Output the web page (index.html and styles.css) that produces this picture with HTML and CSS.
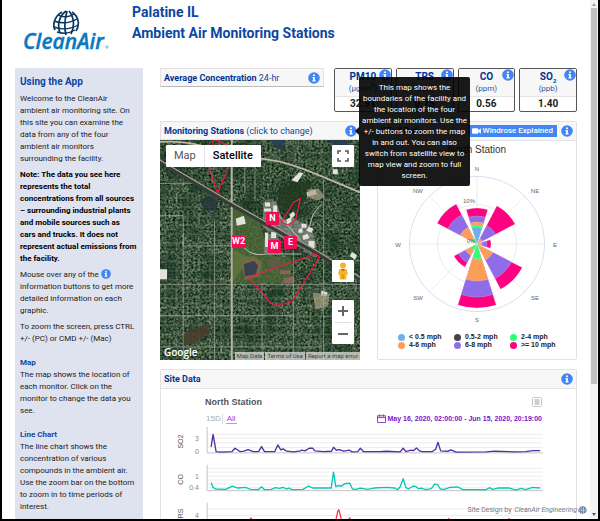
FILE: index.html
```html
<!DOCTYPE html>
<html lang="en">
<head>
<meta charset="utf-8">
<title>Palatine IL Ambient Air Monitoring Stations</title>
<link rel="stylesheet" href="styles.css">
</head>
<body>
<svg class="defs" aria-hidden="true">
  <symbol id="info" viewBox="0 0 12 12">
    <circle cx="6" cy="6" r="5.8" fill="#4285f4"/>
    <path d="M5 2.4h1.9v1.7H5zM4.4 4.9h2.5v3.4h.7v1.1H4.4V8.3h.7V6h-.7z" fill="#fff"/>
  </symbol>
  <symbol id="globe" viewBox="0 0 28 26">
    <g fill="none" stroke="#0b3561" stroke-width="1.7">
      <path d="M10 2C3 6 0 14 3 20M14 1C7 6 5 15 8 23M15 1C13 8 12 17 14 25M17 1c5 6 6 15 2 23M20 2c7 5 8 13 4 19"/>
      <path d="M6 5c5 3 12 2 16-1M2 11c8 3 16 2 23-2M2 17c8 3 17 2 24-2M5 22c6 2 13 1 18-2" stroke-width="1.4"/>
    </g>
  </symbol>
</svg>
<div class="app">
  <div class="page">
    <header class="top">
      <svg class="logo" viewBox="0 0 90 50" role="img" aria-label="CleanAir">
        <use href="#globe" x="29" y="0" width="28" height="26"/>
        <text class="logo-text" x="0" y="39">CleanAir</text>
        <circle cx="84" cy="37" r="1.2" fill="none" stroke="#0a78c0" stroke-width=".5"/>
      </svg>
      <h1>Palatine IL<br>Ambient Air Monitoring Stations</h1>
    </header>
    <div class="columns">
      <aside class="sidebar">
        <h2>Using the App</h2>
        <p>Welcome to the CleanAir ambient air monitoring site. On this site you can examine the data from any of the four ambient air monitors surrounding the facility.</p>
        <p class="strong">Note: The data you see here represents the total concentrations from all sources<br>– surrounding industrial plants and mobile sources such as<br>cars and trucks. It does not represent actual emissions from the facility.</p>
        <p>Mouse over any of the <svg class="inline-info"><use href="#info"/></svg> information buttons to get more detailed information on each graphic.</p>
        <p>To zoom the screen, press CTRL +/- (PC) or CMD +/- (Mac)</p>
        <section><h3>Map</h3><p>The map shows the location of each monitor. Click on the monitor to change the data you see.</p></section>
        <section><h3>Line Chart</h3><p>The line chart shows the concentration of various compounds in the ambient air. Use the zoom bar on the bottom to zoom in to time periods of interest.</p></section>
      </aside>
      <main>
        <div class="averages">
          <h2 class="bar average-title"><span><b>Average Concentration</b> 24-hr</span><button class="info" aria-label="About averages"><svg><use href="#info"/></svg></button></h2>
          <div class="cards">
            <div class="card"><div class="card-head"><b>PM10</b><span>(µg/m<sup>3</sup>)</span><button class="info" aria-label="About PM10"><svg><use href="#info"/></svg></button></div><strong>32.91</strong></div>
            <div class="card"><div class="card-head"><b>TRS</b><span>(ppb)</span><button class="info" aria-label="About TRS"><svg><use href="#info"/></svg></button></div><strong>0.75</strong></div>
            <div class="card"><div class="card-head"><b>CO</b><span>(ppm)</span><button class="info" aria-label="About CO"><svg><use href="#info"/></svg></button></div><strong>0.56</strong></div>
            <div class="card"><div class="card-head"><b>SO<sub>2</sub></b><span>(ppb)</span><button class="info" aria-label="About SO2"><svg><use href="#info"/></svg></button></div><strong>1.40</strong></div>
          </div>
        </div>
        <div class="pair">
          <section class="map-panel">
            <h2 class="bar"><span><b>Monitoring Stations</b> (click to change)</span>
              <span class="tip-anchor"><button class="info" aria-label="About the map" aria-describedby="map-tip"><svg><use href="#info"/></svg></button>
              <span class="tooltip" role="tooltip" id="map-tip">This map shows the<br>boundaries of the facility and<br>the location of the four<br>ambient air monitors. Use the<br>+/- buttons to zoom the map<br>in and out. You can also<br>switch from satellite view to<br>map view and zoom to full<br>screen.</span></span>
            </h2>
            <div class="map">
              <svg class="imagery" viewBox="0 0 198 220" preserveAspectRatio="xMidYMid slice" aria-hidden="true">
                <defs>
                  <filter id="trees" x="0" y="0" width="100%" height="100%" color-interpolation-filters="sRGB">
                    <feTurbulence type="fractalNoise" baseFrequency=".45" numOctaves="3" seed="8"/>
                    <feColorMatrix values=".75 .2 0 0 -.24  .75 .2 0 0 -.15  .75 .2 0 0 -.24  0 0 0 0 1"/>
                  </filter>
                  <filter id="shade" x="0" y="0" width="100%" height="100%" color-interpolation-filters="sRGB">
                    <feTurbulence type="fractalNoise" baseFrequency=".05" numOctaves="2" seed="3"/>
                    <feColorMatrix values="0 0 0 0 .08  0 0 0 0 .2  0 0 0 0 .12  2 0 0 0 -.85"/>
                  </filter>
                  <pattern id="streets" width="11" height="9" patternUnits="userSpaceOnUse"><path d="M0 4.500H11M5.500 0V9" fill="none" stroke="#b4bdae" stroke-width=".8" stroke-opacity=".4" stroke-dasharray="5 1 2 1"/></pattern>
                </defs>
                <rect width="198" height="220" filter="url(#trees)"/>
                <rect width="198" height="220" filter="url(#shade)"/>
                <path d="M0 30L71 75V220H0ZM71 143H198V220H71ZM78 0H198V40L104 15Z" fill="url(#streets)"/>
                <path d="M71 68L98 80 108 115 130 118V143H71Z" fill="#4f6a38" fill-opacity=".75"/>
                <path d="M73 110L90 118 72 142Z" fill="#6d7c45" fill-opacity=".6"/>
                <path d="M80 121L92 116 101 122 98 136 84 140Z" fill="#756a45"/>
                <path d="M83 124L93 121 97 125 95 134 84 136Z" fill="#394151"/>
                <path d="M107 120q6-5 12 0v6q-7 4-12-1z" fill="#5d5d46"/>
                <path d="M115 70L118 52 132 42 152 42 144 62 125 74Z" fill="#20381f" fill-opacity=".8"/>
                <path d="M40 60L48 56 58 62 55 71 43 71Z" fill="#24343a" fill-opacity=".8"/>
                <path d="M22 197L27 190 49 183 48 192 35 203 24 203Z" fill="#4c3e2c" fill-opacity=".85"/>
                <path d="M164 0h20l5 9-12 3zM110 0h14l-2 11-10-3z" fill="#263c50" fill-opacity=".8"/>
                <path d="M102 62L115 62 121 80 132 78 150 88 155 105 150 114 102 88ZM104 92L118 98V113H103Z" fill="#969691" fill-opacity=".6"/>
                <path d="M104 63h5v4h-5zM103 69h7v3h-7zM112 66h4v8h-4zM75 79l8-3 2 8-9 2zM130 41l8-8 4 1-6 9zM104 93h3v14h-3zM110 92l5 1v5h-5zM140 84h5v4h-5zM147 87l5 2-2 4-5-2zM128 75l4-3 2 3-4 4zM125 80l5-3v5l-4 3zM145 53l9-3 1 5-9 2zM141 96l5-2 2 4-6 2zM0 129h7v10H0zM147 101h6v7h-6zM137 90l4-2v5h-4zM171 30h5v5h-5zM160 150l6 2-1 4-6-1zM190 112l5 3-2 5-5-4z" fill="#e3e2dc"/>
                <path d="M146 50l11-1 6 8-7 4-10-4zM151 152l17 2-2 12-12 3z" fill="#aaa284" fill-opacity=".7"/>
                <path d="M119 130h10v4h-10zM122 138l10-2v7h-10z" fill="#8a6459"/>
                <g fill="none" stroke="#a7ad9e">
                  <path d="M23 95V220M54 80V220M101 143V220M132 110V220M162 40V220M0 144H198M0 175H132M0 206H160M0 76H23V106H71M0 44H35M84 20V54M94 22V62M30 3L33 25" stroke-width=".9" stroke-opacity=".75"/>
                  <path d="M71 0V220" stroke="#b7b5a1" stroke-width="2"/>
                  <path d="M0 3C40 0 55 15 104 20C130 23 150 33 198 53" stroke="#bdb7a4" stroke-width="1.800"/>
                  <path d="M0 23L71 65 154 112 198 139" stroke="#343d3a" stroke-width="4"/>
                  <path d="M0 21L71 63 154 110 198 137" stroke="#a8a293" stroke-width="1.200"/>
                  <path d="M71 104Q80 104 86 110T105 114H140M117 75L139 100M160 65Q150 72 148 88" stroke="#b3b5a8" stroke-width="1"/>
                </g>
                <g fill="none" stroke="#ff1744" stroke-width="1.100" stroke-linejoin="round">
                  <path d="M53 0L66 6 68 27 57 54 48 27Z"/>
                  <path d="M139 59L132 63 120 83 127 85 134 81Z"/>
                  <path d="M88 137L154 114 158 117 131 161 117 165 110 163Z"/>
                </g>
              </svg>
              <button class="pin pin-n">N</button>
              <button class="pin pin-w">W2</button>
              <button class="pin pin-m">M</button>
              <button class="pin pin-e">E</button>
              <div class="overlay">
                <div class="overlay-top">
                  <div class="types"><button>Map</button><button class="on">Satellite</button></div>
                  <button class="square" aria-label="Full screen"><svg viewBox="0 0 12 12"><path d="M1 4V1H4M8 1H11V4M11 8V11H8M4 11H1V8" fill="none" stroke="#555" stroke-width="1.500"/></svg></button>
                </div>
                <div class="overlay-side">
                  <button class="square" aria-label="Street view"><svg class="pegman" viewBox="0 0 12 18"><circle cx="6" cy="3.500" r="3" fill="#f5b324"/><path d="M2.500 7h7l1.500 5-1.500 1-.5 4.500H3L2.500 13 1 12z" fill="#f5b324"/><path d="M4 7h4L6 9.500z" fill="#e04a3a"/><path d="M6 12.500V17" stroke="#b87912" stroke-width=".8"/></svg></button>
                  <div class="zoomer">
                    <button aria-label="Zoom in"><svg viewBox="0 0 10 10"><path d="M5 0V10M0 5H10" stroke="#666" stroke-width="2"/></svg></button>
                    <button aria-label="Zoom out"><svg viewBox="0 0 10 10"><path d="M0 5H10" stroke="#666" stroke-width="2"/></svg></button>
                  </div>
                </div>
                <div class="overlay-foot"><span class="google">Google</span><div class="legal"><a href="#">Map Data</a><a href="#">Terms of Use</a><a href="#">Report a map error</a></div></div>
              </div>
            </div>
          </section>
          <section class="wind">
            <h2 class="bar"><b>Wind Data</b><span class="bar-tools"><button class="explain"><svg viewBox="0 0 10 8"><rect y="1" width="7" height="6" rx="1" fill="#fff"/><path d="M6 4L10 1V7z" fill="#fff"/></svg>Windrose Explained</button><button class="info" aria-label="About the windrose"><svg><use href="#info"/></svg></button></span></h2>
            <h3>North Station</h3>
            <svg class="rose" viewBox="-99 -80 198 160" role="img" aria-label="Windrose for North Station">
              <g fill="none" stroke="#e6e6e6" stroke-width=".8">
                <path d="M0-67V67M-67 0H67M-48-48L48 48M-48 48L48-48"/><circle r="39.500"/><circle r="67.500" stroke="#ccd6eb"/>
              </g>
              <g id="petals"></g>
              <g class="rose-text">
                <text y="-73">N</text><text x="58" y="-51">NE</text><text x="78" y="3">E</text><text x="58" y="56">SE</text><text y="78">S</text><text x="-59" y="56">SW</text><text x="-79" y="3">W</text><text x="-59" y="-51">NW</text>
                <text x="-8" y="-41">10%</text><text x="-6" y="-1">0%</text>
              </g>
            </svg>
            <ul class="legend"><li class="c1">&lt; 0.5 mph</li><li class="c2">0.5-2 mph</li><li class="c3">2-4 mph</li><li class="c4">4-6 mph</li><li class="c5">6-8 mph</li><li class="c6">&gt;= 10 mph</li></ul>
          </section>
        </div>
        <section class="site">
          <h2 class="bar"><b>Site Data</b><button class="info" aria-label="About site data"><svg><use href="#info"/></svg></button></h2>
          <div class="site-head">
            <div class="row"><h3>North Station</h3><button class="menu" aria-label="Chart menu"><svg viewBox="0 0 10 10"><rect x=".5" y=".5" width="9" height="9" rx="1" fill="none" stroke="#bbb" stroke-width=".8"/><path d="M2.500 3h5M2.500 5h5M2.500 7h5" stroke="#888" stroke-width=".8"/></svg></button></div>
            <div class="row"><div class="ranges"><button>15D</button><button class="on">All</button></div><div class="dates"><svg viewBox="0 0 10 10"><path d="M.5 2h9v7.500h-9zM.5 4h9M3 .3V3M7 .3V3" fill="none" stroke="#8424c9"/></svg>May 16, 2020, 02:00:00 - Jun 15, 2020, 20:19:00</div></div>
          </div>
          <svg class="lines" viewBox="30 198 1251 285" role="img" aria-label="Compound levels over time">
            <path d="M169 220H1181M169 232H1181M169 246H1181M169 260H1181M169 323H1181M169 334H1181M169 346H1181M169 358H1181M169 370H1181M169 381H1181M169 445H1181M169 465H1181" stroke="#ededed" stroke-width="3"/>
            <path d="M169 198V276H1181M169 312V390H1181M169 426V500" fill="none" stroke="#c4c4c4" stroke-width="3"/>
            <g fill="none" stroke-width="4" stroke-linejoin="round">
              <polyline stroke="#512da8" points="181,258 187,220 196,272 210,274 244,272 253,262 268,272 280,271 292,266 308,272 324,272 333,257 342,272 373,272 382,252 391,267 398,264 409,271 430,273 450,270 454,268 464,270 477,262 487,262 494,270 520,272 544,271 550,259 559,268 567,266 581,271 598,268 606,273 623,272 631,262 640,272 690,272 710,271 751,273 760,262 768,272 784,268 792,269 800,261 808,269 816,272 848,272 858,265 865,244 873,270 896,271 904,267 920,274 1010,273 1035,271 1100,273 1130,272 1152,269 1173,269"/>
              <polyline stroke="#00c9b7" points="181,366 187,380 194,385 225,386 245,376 262,382 285,380 300,386 323,387 333,378 342,387 362,386 375,381 387,383 398,380 408,385 415,382 425,387 458,386 475,376 487,382 543,382 550,334 557,378 567,374 573,377 583,369 599,367 607,385 618,386 631,382 653,386 672,382 710,380 735,382 743,387 751,378 760,354 768,380 776,385 790,376 798,377 806,384 815,382 828,387 845,384 855,370 864,372 872,385 885,386 900,380 925,379 940,387 1010,387 1020,381 1030,386 1045,382 1080,382 1100,388 1115,383 1130,387 1150,380 1173,382"/>
              <polyline stroke="#ff3b5c" points="181,490 296,482 301,472 306,484 556,484 563,452 566,447 571,465 575,484 594,480 599,472 604,484 893,480 897,474 902,484 1075,480 1079,474 1084,484"/>
            </g>
            <g class="ticks"><text x="144" y="240">3</text><text x="144" y="279">0</text><text x="144" y="354">1</text><text x="144" y="389">0.4</text><text x="144" y="472">4</text></g>
            <g class="axis"><text transform="translate(97 242) rotate(-90)">SO2</text><text transform="translate(97 356) rotate(-90)">CO</text><text transform="translate(97 465) rotate(-90)">TRS</text></g>
          </svg>
        </section>
      </main>
    </div>
    <footer class="credit">Site Design by <em>CleanAir Engineering</em><svg><use href="#globe"/></svg></footer>
  </div>
  <div class="scroll" aria-hidden="true"><i class="up"></i><span></span><i class="down"></i></div>
</div>
<script src="rose.js"></script>
</body>
</html>
```
FILE: rose.js
```js
// Stacked petals, one entry per compass direction: [bearing, [[radius, speed class], ...]]
const directions = [
  [45, [[43, 6], [21, 5], [6, 4]]],
  [90, [[14, 6], [10, 5], [5, 4]]],
  [135, [[51, 6], [39, 5], [18, 4], [4, 3]]],
  [180, [[64, 6], [53, 5], [37, 4], [15, 3]]],
  [225, [[26, 6], [21, 5], [13, 4], [7, 3]]],
  [315, [[45, 6], [33, 5], [19, 4], [7, 3]]],
  [0, [[36, 6], [28, 5], [22, 4], [19, 3], [17, 1]]]
];
const ns = "http://www.w3.org/2000/svg";
const target = document.getElementById("petals");
for (const [bearing, bands] of directions) {
  for (const [r, speed] of bands) {
    const p = document.createElementNS(ns, "path");
    const x = 0.3 * r, y = -0.954 * r;
    p.setAttribute("d", `M0 0L${-x} ${y}A${r} ${r} 0 0 1 ${x} ${y}Z`);
    p.setAttribute("transform", `rotate(${bearing})`);
    p.setAttribute("class", "c" + speed);
    target.append(p);
  }
}
```
FILE: styles.css
```css
* { box-sizing: border-box; }
body { margin: 0; background: #fff; font: 8px/12px Roboto, sans-serif; color: #222; }
h1, h2, h3, p, ul { margin: 0; padding: 0; }
button { border: 0; padding: 0; margin: 0; background: none; font: inherit; color: inherit; }
svg { display: block; }
.defs { position: absolute; width: 0; height: 0; }
.app { display: flex; height: 100vh; overflow: hidden; border: solid #000; border-width: 0 2px 2px; }
.page { flex: 1; min-width: 0; padding: 0 13px; position: relative; }
.top { display: flex; height: 68px; }
.logo { width: 90px; height: 50px; margin: 10px 19px 0 8px; overflow: visible; }
.logo-text { font: italic 600 21px "Open Sans", sans-serif; fill: #0a78c0; stroke: #0a78c0; stroke-width: .4px; }
h1 { font-size: 14px; line-height: 21px; font-weight: 700; color: #0d47a1; padding-top: 2px; }
.columns { display: grid; grid-template-columns: 128px minmax(0, 1fr); gap: 17px; }

.sidebar { background: #dfe3f0; padding: 7px 5px 60px; }
.sidebar h2 { font-size: 10px; line-height: 14px; font-weight: 700; color: #0d47a1; margin-bottom: 4px; }
.sidebar p { margin-bottom: 4px; }
.sidebar .strong { font-weight: 700; color: #000; margin-right: -4px; }
.sidebar section { padding-top: 8px; }
.sidebar h3 { font-size: 8px; line-height: 12px; color: #0d47a1; }
.inline-info { display: inline-block; width: 10px; height: 10px; vertical-align: -2px; }

main { min-width: 0; }
.bar { display: flex; align-items: center; justify-content: space-between; height: 19px; padding: 0 3px; background: #f7f7f7; border: 1px solid #e2e2e2; font-size: 9px; line-height: 12px; font-weight: 400; color: #0d47a1; white-space: nowrap; }
.bar b { color: #003594; }
.info { flex: none; display: block; width: 12px; height: 12px; }
.info svg { width: 12px; height: 12px; }
.averages { display: grid; grid-template-columns: 164fr 243fr; gap: 10px; margin-bottom: 9px; }
.average-title { border-bottom-color: #bbb; }
.cards { display: grid; grid-template-columns: repeat(4, 1fr); gap: 4px; }
.card { height: 44px; border: 1px solid #555; border-radius: 2px; text-align: center; }
.card-head { position: relative; height: 28px; padding-top: 2px; background: #f7f7f7; border-bottom: 1px solid #e4e4e4; color: #2456a5; }
.card-head b { display: block; font-size: 10px; line-height: 12px; color: #003594; }
.card-head span { display: block; line-height: 12px; }
.card-head .info { position: absolute; top: 0; right: 0; }
sub, sup { font-size: 6px; line-height: 0; }
.card strong { display: block; font-size: 10px; line-height: 14px; }

.pair { display: grid; grid-template-columns: minmax(0, 1fr) minmax(0, 1fr); gap: 17px; margin-bottom: 9px; }
.map-panel .bar { padding-right: 2px; }
.tip-anchor { position: relative; }
.tooltip { position: absolute; z-index: 5; left: 14px; top: -48px; width: 111px; padding: 5px 1px; border-radius: 2px; background: rgba(0, 0, 0, .9); color: #fff; font-size: 8px; line-height: 11px; text-align: center; white-space: nowrap; }
.tooltip::before { content: ""; position: absolute; left: -4px; top: 50px; border: solid transparent; border-width: 4px 4px 4px 0; border-right-color: #111; }
.map { position: relative; height: 220px; overflow: hidden; }
.imagery { width: 100%; height: 100%; }
.pin { position: absolute; width: 13px; height: 13px; background: #f50a55; border-radius: 1px; color: #fff; font-size: 9px; line-height: 13px; font-weight: 700; }
.pin-n { left: 53%; top: 72px; }
.pin-w { left: 36%; top: 95px; }
.pin-m { left: 54%; top: 100px; }
.pin-e { left: 62%; top: 96px; }
.overlay { position: absolute; inset: 0; display: flex; flex-direction: column; justify-content: space-between; padding: 5px 6px 0; }
.overlay-top { display: flex; justify-content: space-between; }
.types { display: flex; background: #fff; border-radius: 1px; font-size: 11px; line-height: 22px; color: #555; }
.types button { padding: 0 8px; }
.types .on { color: #000; font-weight: 500; border-left: 1px solid #e6e6e6; }
.square { display: grid; place-items: center; width: 22px; height: 22px; background: #fff; border-radius: 1px; }
.square svg { width: 12px; height: 12px; }
.square .pegman { width: 12px; height: 18px; }
.overlay-side { flex: 1; display: flex; flex-direction: column; align-items: flex-end; justify-content: flex-end; gap: 18px; }
.zoomer { width: 22px; background: #fff; border-radius: 1px; padding: 0 3px; }
.zoomer button { display: grid; place-items: center; width: 16px; height: 22px; }
.zoomer button + button { border-top: 1px solid #ddd; }
.zoomer svg { width: 10px; height: 10px; }
.overlay-foot { display: flex; justify-content: space-between; align-items: flex-end; margin: 0 -6px; padding: 0 0 0 4px; }
.google { color: #fff; font: 600 10px/16px "Open Sans", sans-serif; }
.legal { display: flex; gap: 1px; font-size: 6px; line-height: 8px; }
.legal a { padding: 0 2px; background: rgba(210, 212, 208, .8); color: #444; text-decoration: none; white-space: nowrap; }

.wind { border: 1px solid #e2e2e2; border-radius: 2px; }
.wind .bar { border-width: 0 0 1px; }
.bar-tools { display: flex; align-items: center; gap: 4px; }
.explain { display: flex; align-items: center; gap: 2px; height: 12px; padding: 0 4px; background: #4285f4; color: #fff; font-size: 8px; font-weight: 500; }
.explain svg { width: 9px; height: 8px; }
.wind h3 { font: 400 10px/12px "Liberation Sans", sans-serif; color: #333; text-align: center; padding-top: 3px; }
.rose { width: 100%; height: 160px; margin-top: 8px; }
.rose-text { font: 6px "Liberation Sans", sans-serif; fill: #666; text-anchor: middle; }
.c1 { fill: #6eb0ec; }
.c2 { fill: #434348; }
.c3 { fill: #2eff76; }
.c4 { fill: #fd9d58; }
.c5 { fill: #8f6de8; }
.c6 { fill: #ff0080; }
#petals path { stroke: #fff; stroke-width: .2px; }
.legend { list-style: none; display: grid; grid-template-columns: repeat(3, 56px); justify-content: center; padding: 9px 0 0 10px; font: 700 7px/8px "Liberation Sans", sans-serif; }
.legend li { display: flex; align-items: center; gap: 4px; white-space: nowrap; color: #222; }
.legend li::before { content: ""; width: 7px; height: 7px; border-radius: 50%; }
.legend .c1::before { background: #6eb0ec; }
.legend .c2::before { background: #434348; }
.legend .c3::before { background: #2eff76; }
.legend .c4::before { background: #fd9d58; }
.legend .c5::before { background: #8f6de8; }
.legend .c6::before { background: #ff0080; }

.site { border: 1px solid #e2e2e2; border-bottom: 0; border-radius: 2px; }
.site .bar { border-width: 0 0 1px; }
.site-head { padding: 4px 34px 0 44px; font-family: "Liberation Sans", sans-serif; }
.row { display: flex; justify-content: space-between; align-items: center; height: 17px; }
.row h3 { font-size: 9px; line-height: 12px; color: #555; }
.menu svg { width: 10px; height: 10px; }
.ranges { display: flex; font-size: 8px; line-height: 9px; color: #a9a9b4; }
.ranges button { padding: 0 1px; }
.ranges .on { color: #8a4be0; border-bottom: 1px solid #b79aef; margin-left: 3px; }
.ranges button:first-child { border-right: 1px solid #ddd; }
.dates { display: flex; align-items: center; gap: 2px; color: #7a12c4; font-size: 7px; font-weight: 700; white-space: nowrap; }
.dates svg { width: 9px; height: 9px; }
.lines { width: 100%; }
.ticks { font: 21px "Liberation Sans", sans-serif; fill: #888; text-anchor: end; }
.axis { font: 21px "Liberation Sans", sans-serif; fill: #555; text-anchor: middle; }
.credit { position: absolute; right: 3px; bottom: 3px; display: flex; align-items: center; gap: 1px; color: #777; font-size: 7px; line-height: 12px; white-space: pre; }
.credit svg { width: 9px; height: 8px; }

.scroll { width: 8px; display: flex; flex-direction: column; align-items: center; background: #f4f4f4; padding: 2px 0; }
.scroll span { width: 6px; flex: 0 0 73%; background: #c1c1c1; margin: 2px 0 auto; }
.scroll i { width: 0; height: 4px; border: solid transparent; border-width: 0 2px 3px; border-bottom-color: #999; }
.scroll .down { border-width: 3px 2px 0; border-top-color: #555; }
```
